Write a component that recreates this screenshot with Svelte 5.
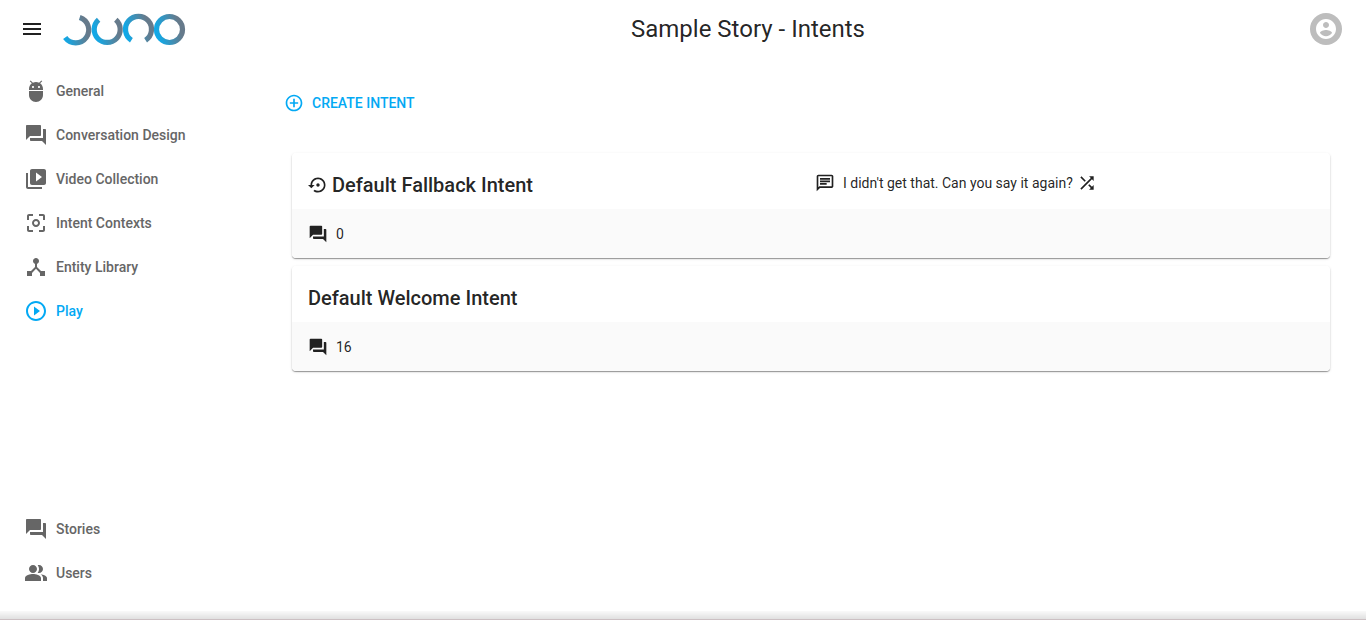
<script>
  const icons = {
    menu: 'M3 18h18v-2H3v2zm0-5h18v-2H3v2zm0-7v2h18V6H3z',
    bug: 'M5 16c0 3.87 3.13 7 7 7s7-3.13 7-7v-4H5v4zM16.12 4.37l2.1-2.1-.82-.83-2.3 2.31C14.16 3.28 13.12 3 12 3s-2.16.28-3.09.75L6.6 1.44l-.82.83 2.1 2.1C6.14 5.64 5 7.68 5 10v1h14v-1c0-2.32-1.14-4.36-2.88-5.63zM9 9c-.55 0-1-.45-1-1s.45-1 1-1 1 .45 1 1-.45 1-1 1zm6 0c-.55 0-1-.45-1-1s.45-1 1-1 1 .45 1 1-.45 1-1 1z',
    forum: 'M21 6h-2v9H6v2c0 .55.45 1 1 1h11l4 4V7c0-.55-.45-1-1-1zm-4 6V3c0-.55-.45-1-1-1H3c-.55 0-1 .45-1 1v14l4-4h10c.55 0 1-.45 1-1z',
    video: 'M4 6H2v14c0 1.1.9 2 2 2h14v-2H4V6zm16-4H8c-1.1 0-2 .9-2 2v12c0 1.1.9 2 2 2h12c1.1 0 2-.9 2-2V4c0-1.1-.9-2-2-2zm-8 12.5v-9l6 4.5-6 4.5z',
    focus: 'M5 15H3v4c0 1.1.9 2 2 2h4v-2H5v-4zM5 5h4V3H5c-1.1 0-2 .9-2 2v4h2V5zm14-2h-4v2h4v4h2V5c0-1.1-.9-2-2-2zm0 16h-4v2h4c1.1 0 2-.9 2-2v-4h-2v4zM12 8c-2.21 0-4 1.79-4 4s1.79 4 4 4 4-1.79 4-4-1.79-4-4-4zm0 6c-1.1 0-2-.9-2-2s.9-2 2-2 2 .9 2 2-.9 2-2 2z',
    hub: 'M17 16l-4-4V8.82C14.16 8.4 15 7.3 15 6c0-1.66-1.34-3-3-3S9 4.34 9 6c0 1.3.84 2.4 2 2.82V12l-4 4H3v5h5v-3.05l4-4.2 4 4.2V21h5v-5h-4z',
    play: 'M10 16.5l6-4.5-6-4.5v9zM12 2C6.48 2 2 6.48 2 12s4.48 10 10 10 10-4.48 10-10S17.52 2 12 2zm0 18c-4.41 0-8-3.59-8-8s3.59-8 8-8 8 3.59 8 8-3.59 8-8 8z',
    people: 'M16.67 13.13C18.04 14.06 19 15.32 19 17v3h4v-3c0-2.18-3.57-3.47-6.33-3.87zM15 12c2.21 0 4-1.79 4-4s-1.79-4-4-4c-.47 0-.91.1-1.33.24C14.5 5.27 15 6.58 15 8s-.5 2.73-1.33 3.76c.42.14.86.24 1.33.24zM9 12c2.21 0 4-1.79 4-4s-1.79-4-4-4-4 1.79-4 4 1.79 4 4 4zm0 1c-2.67 0-8 1.34-8 4v3h16v-3c0-2.66-5.33-4-8-4z',
    add: 'M13 7h-2v4H7v2h4v4h2v-4h4v-2h-4V7zm-1-5C6.48 2 2 6.48 2 12s4.48 10 10 10 10-4.48 10-10S17.52 2 12 2zm0 18c-4.41 0-8-3.59-8-8s3.59-8 8-8 8 3.59 8 8-3.59 8-8 8z',
    restore: 'M14 12c0-1.1-.9-2-2-2s-2 .9-2 2 .9 2 2 2 2-.9 2-2zm-2-9c-4.97 0-9 4.03-9 9H0l4 4 4-4H5c0-3.87 3.13-7 7-7s7 3.13 7 7-3.13 7-7 7c-1.51 0-2.91-.49-4.06-1.3l-1.42 1.44C8.04 20.3 9.94 21 12 21c4.97 0 9-4.03 9-9s-4.03-9-9-9z',
    chat: 'M4 4h16v12H5.17L4 17.17V4m0-2c-1.1 0-1.99.9-1.99 2L2 22l4-4h14c1.1 0 2-.9 2-2V4c0-1.1-.9-2-2-2H4zm2 10h8v2H6v-2zm0-3h12v2H6V9zm0-3h12v2H6V6z',
    shuffle: 'M10.59 9.17L5.41 4 4 5.41l5.17 5.17 1.42-1.41zM14.5 4l2.04 2.04L4 18.59 5.41 20 17.96 7.46 20 9.5V4h-5.5zm.33 9.41l-1.41 1.41 3.13 3.13L14.5 20H20v-5.5l-2.04 2.04-3.13-3.13z',
    account: 'M12 2C6.48 2 2 6.48 2 12s4.48 10 10 10 10-4.48 10-10S17.52 2 12 2zm0 3c1.66 0 3 1.34 3 3s-1.34 3-3 3-3-1.34-3-3 1.34-3 3-3zm0 14.2c-2.5 0-4.71-1.28-6-3.22.03-1.99 4-3.08 6-3.08 1.99 0 5.97 1.09 6 3.08-1.29 1.94-3.5 3.22-6 3.22z'
  };

  const storyLinks = [
    { label: 'General', icon: 'bug' },
    { label: 'Conversation Design', icon: 'forum' },
    { label: 'Video Collection', icon: 'video' },
    { label: 'Intent Contexts', icon: 'focus' },
    { label: 'Entity Library', icon: 'hub' },
    { label: 'Play', icon: 'play', active: true }
  ];

  const appLinks = [
    { label: 'Stories', icon: 'forum' },
    { label: 'Users', icon: 'people' }
  ];

  const intents = [
    { name: 'Default Fallback Intent', fallback: true, reply: "I didn't get that. Can you say it again?", phrases: 0 },
    { name: 'Default Welcome Intent', phrases: 16 }
  ];
</script>

{#snippet icon(name, small = false)}
  <svg class="icon" class:small viewBox="0 0 24 24" aria-hidden="true"><path d={icons[name]} /></svg>
{/snippet}

{#snippet links(items)}
  <ul>
    {#each items as item}
      <li>
        <a href="#top" class:active={item.active} aria-current={item.active ? 'page' : undefined}>
          {@render icon(item.icon)}
          {item.label}
        </a>
      </li>
    {/each}
  </ul>
{/snippet}

<div class="app">
  <header>
    <button class="menu" aria-label="Menu">{@render icon('menu')}</button>
    <a class="logo" href="#top" aria-label="Juno">
      <svg viewBox="0 0 122 32" aria-hidden="true">
        <defs>
          {#each [11.5, 43, 74.5, 105.5] as cx, i}
            <linearGradient id="ring{i}" gradientUnits="userSpaceOnUse" x1={cx - 12} y1="20" x2={cx + 10} y2="14">
              <stop offset="0" stop-color="#12a8e6" />
              <stop offset="1" stop-color="#667a8b" />
            </linearGradient>
          {/each}
        </defs>
        <g fill="none" stroke-width="5.2">
          <path stroke="url(#ring0)" d="M15.7 4.4A13 13 0 1 1 1.2 24.4" />
          <path stroke="url(#ring1)" d="M34.6 6.7A13 13 0 1 0 51.8 6.7" />
          <path stroke="url(#ring2)" d="M67.4 27.2A13 13 0 1 1 81.6 27.2" />
          <circle stroke="url(#ring3)" cx="105.5" cy="16.5" r="13" />
        </g>
      </svg>
    </a>
    <h1>Sample Story - Intents</h1>
    <button class="avatar" aria-label="Account">{@render icon('account')}</button>
  </header>

  <div class="body">
    <nav>
      {@render links(storyLinks)}
      {@render links(appLinks)}
    </nav>
    <main>
      <button class="create">{@render icon('add', true)}Create Intent</button>
      <div class="cards">
        {#each intents as intent}
          <article>
            <div class="summary">
              <h2>
                {#if intent.fallback}{@render icon('restore', true)}{/if}
                {intent.name}
              </h2>
              {#if intent.reply}
                <p>
                  {@render icon('chat', true)}
                  <span>{intent.reply}</span>
                  {@render icon('shuffle', true)}
                </p>
              {/if}
            </div>
            <footer>{@render icon('forum', true)}{intent.phrases}</footer>
          </article>
        {/each}
      </div>
    </main>
  </div>
  <div class="edge"></div>
</div>

<style>
  :global(body) {
    margin: 0;
    background: #fff;
  }
  .app {
    display: flex;
    flex-direction: column;
    box-sizing: border-box;
    min-height: 100vh;
    font-family: Roboto, sans-serif;
    font-size: 14px;
    line-height: 20px;
    color: rgba(0, 0, 0, 0.87);
  }
  button {
    display: flex;
    align-items: center;
    padding: 0;
    border: 0;
    background: none;
    font: inherit;
    color: inherit;
    cursor: pointer;
  }
  .icon {
    display: block;
    flex: none;
    width: 24px;
    height: 24px;
    fill: currentColor;
  }
  .icon.small {
    width: 20px;
    height: 20px;
  }
  header {
    display: flex;
    align-items: center;
    height: 58px;
    padding: 0 24px 0 20px;
  }
  .logo {
    margin-left: 20px;
  }
  .logo svg {
    display: block;
    width: 122px;
    height: 32px;
    overflow: visible;
  }
  h1 {
    flex: 1;
    margin: 0;
    font-size: 24px;
    line-height: 32px;
    font-weight: 400;
    text-align: center;
  }
  .avatar {
    justify-content: center;
    width: 32px;
    height: 32px;
    border-radius: 50%;
    background: #bdbdbd;
    color: #fff;
  }
  .body {
    display: flex;
    flex: 1;
  }
  nav {
    display: flex;
    flex-direction: column;
    justify-content: space-between;
    flex: none;
    box-sizing: border-box;
    width: 256px;
    padding: 11px 0 25px;
  }
  ul {
    margin: 0;
    padding: 0;
    list-style: none;
  }
  nav a {
    display: flex;
    align-items: center;
    gap: 8px;
    height: 44px;
    padding-left: 24px;
    font-weight: 500;
    color: #666;
    text-decoration: none;
  }
  nav a.active {
    color: #03a9f4;
  }
  main {
    flex: 1;
    min-width: 0;
    padding: 27px 36px 24px;
  }
  .create {
    gap: 8px;
    height: 36px;
    margin-left: -8px;
    font-weight: 500;
    text-transform: uppercase;
    color: #03a9f4;
  }
  .cards {
    display: grid;
    gap: 8px;
    margin-top: 32px;
  }
  article {
    overflow: hidden;
    border-radius: 4px;
    box-shadow: 0 1px 1px rgba(0, 0, 0, 0.36), 0 1px 3px rgba(0, 0, 0, 0.12);
  }
  .summary {
    display: grid;
    grid-template-columns: 1fr 1fr;
    align-items: center;
    height: 56px;
    padding: 0 16px;
    background: #fff;
  }
  h2 {
    display: flex;
    align-items: center;
    gap: 4px;
    margin: 0;
    padding-top: 8px;
    font-size: 20px;
    line-height: 28px;
    font-weight: 500;
  }
  p {
    display: flex;
    align-items: center;
    margin: 0;
    padding: 4px 0 0 4px;
  }
  p span {
    margin: 0 4px 0 8px;
  }
  footer {
    display: flex;
    align-items: center;
    gap: 8px;
    height: 49px;
    padding: 0 16px;
    background: #fafafa;
  }
  .edge {
    position: fixed;
    right: 0;
    bottom: 0;
    left: 0;
    height: 8px;
    border-bottom: 1px solid #ccc0c3;
    background: linear-gradient(rgba(0, 0, 0, 0.02), rgba(0, 0, 0, 0.12));
    pointer-events: none;
  }
</style>
